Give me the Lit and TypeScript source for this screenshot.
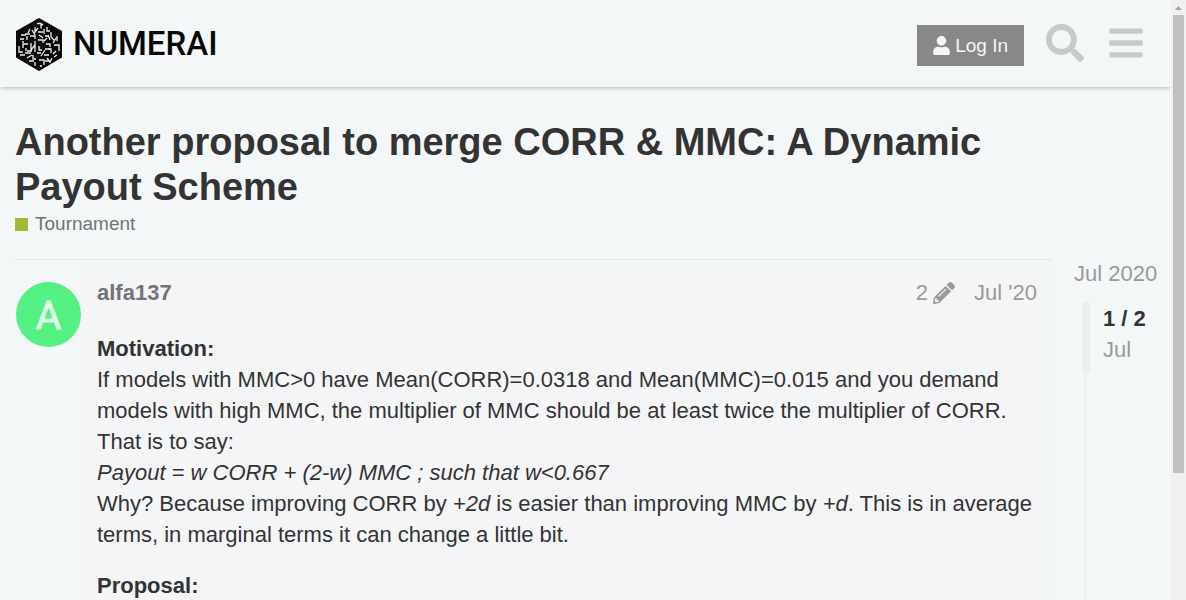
import { LitElement, html, css, svg } from "lit";
import { customElement } from "lit/decorators.js";

const icons = {
  user: {
    box: "0 0 448 512",
    d: "M224 256c70.7 0 128-57.3 128-128S294.7 0 224 0 96 57.3 96 128s57.3 128 128 128zm89.6 32h-16.7c-22.2 10.2-46.9 16-72.9 16s-50.6-5.8-72.9-16h-16.7C60.2 288 0 348.2 0 422.4V464c0 26.5 21.5 48 48 48h352c26.5 0 48-21.5 48-48v-41.6c0-74.2-60.2-134.4-134.4-134.4z",
  },
  search: {
    box: "0 0 512 512",
    d: "M505 442.7L405.3 343c-4.5-4.5-10.6-7-17-7H372c27.6-35.3 44-79.7 44-128C416 93.1 322.9 0 208 0S0 93.1 0 208s93.1 208 208 208c48.3 0 92.7-16.4 128-44v16.3c0 6.4 2.5 12.5 7 17l99.7 99.7c9.4 9.4 24.6 9.4 33.9 0l28.3-28.3c9.4-9.4 9.4-24.6.1-34zM208 336c-70.7 0-128-57.2-128-128 0-70.7 57.2-128 128-128 70.7 0 128 57.2 128 128 0 70.7-57.2 128-128 128z",
  },
  bars: {
    box: "0 0 448 512",
    d: "M16 132h416c8.8 0 16-7.2 16-16V76c0-8.8-7.2-16-16-16H16C7.2 60 0 67.2 0 76v40c0 8.8 7.2 16 16 16zm0 160h416c8.8 0 16-7.2 16-16v-40c0-8.8-7.2-16-16-16H16c-8.8 0-16 7.2-16 16v40c0 8.8 7.2 16 16 16zm0 160h416c8.8 0 16-7.2 16-16v-40c0-8.8-7.2-16-16-16H16c-8.8 0-16 7.2-16 16v40c0 8.8 7.2 16 16 16z",
  },
  pencil: {
    box: "0 0 512 512",
    d: "M497.9 142.1l-46.1 46.1c-4.7 4.7-12.3 4.7-17 0l-111-111c-4.7-4.7-4.7-12.3 0-17l46.1-46.1c18.7-18.7 49.1-18.7 67.9 0l60.1 60.1c18.8 18.7 18.8 49.1 0 67.9zM284.2 99.8L21.6 362.4.4 483.9c-2.9 16.4 11.4 30.6 27.8 27.8l121.5-21.3 262.6-262.6c4.7-4.7 4.7-12.3 0-17l-111-111c-4.8-4.7-12.4-4.7-17.1 0zM124.1 339.9c-5.5-5.5-5.5-14.3 0-19.8l154-154c5.5-5.5 14.3-5.5 19.8 0s5.5 14.3 0 19.8l-154 154c-5.5 5.5-14.3 5.5-19.8 0zM88 424h48v36.3l-64.5 11.3-31.1-31.1L51.7 376H88v48z",
  },
};

const icon = (name: keyof typeof icons) => html`
  <svg class="icon ${name}" viewBox=${icons[name].box} aria-hidden="true">
    ${svg`<path d=${icons[name].d}></path>`}
  </svg>
`;

@customElement("app-root")
export class AppRoot extends LitElement {
  static styles = css`
    :host {
      display: flex;
      height: 100vh;
      overflow: hidden;
      background: #f3f7f8;
      color: #333;
      font: 22px/31px "Liberation Sans", Arial, sans-serif;
    }
    a {
      color: inherit;
      text-decoration: none;
    }
    button {
      border: 0;
      padding: 0;
      background: none;
      font: inherit;
      cursor: pointer;
    }
    .icon {
      display: block;
      fill: currentColor;
    }
    .page {
      flex: 1;
      min-width: 0;
      overflow: hidden;
    }

    .header {
      display: flex;
      align-items: center;
      height: 87px;
      padding: 0 15px 1px;
      box-sizing: border-box;
      box-shadow: 0 2px 4px -1px rgba(0, 0, 0, 0.25);
    }
    .logo {
      display: flex;
      align-items: center;
      gap: 10px;
      margin: 2px auto 0 0;
      color: #070909;
      font: 500 33px/52px Roboto, sans-serif;
    }
    .mark {
      width: 48px;
      height: 54px;
    }
    .login {
      display: flex;
      align-items: center;
      gap: 5px;
      height: 41px;
      padding: 0 16px;
      margin: 5px 10px 0 0;
      background: #888;
      color: #f3f7f8;
      font-size: 19px;
    }
    .user {
      width: 17px;
      height: 19px;
    }
    .tool {
      display: flex;
      justify-content: center;
      align-items: center;
      width: 61px;
      height: 60px;
      color: #c8c9ca;
    }
    .search {
      width: 38px;
      height: 38px;
    }
    .bars {
      width: 34px;
      height: 38px;
    }

    .content {
      padding: 33px 15px 0;
    }
    h1 {
      margin: 0;
      padding-right: 103px;
      font-size: 38px;
      line-height: 45px;
    }
    .category {
      display: flex;
      width: fit-content;
      align-items: center;
      gap: 7px;
      color: #737475;
      font-size: 19px;
      line-height: 28px;
    }
    .swatch {
      width: 13px;
      height: 13px;
      background: #a1b83b;
    }
    .topic {
      display: grid;
      grid-template-columns: minmax(0, 1fr) 82px;
      column-gap: 21px;
      margin-top: 21px;
    }
    .post {
      display: flex;
      border-top: 1px solid #e8e9ea;
    }
    .avatar {
      flex: none;
      display: block;
      width: 65px;
      height: 65px;
      margin: 22px 0 0 1px;
    }
    .avatar svg {
      display: block;
    }
    .body {
      flex: 1;
      min-width: 0;
      padding: 17px 16px 40px;
      background: #f4f5f7;
    }
    .meta {
      display: flex;
      color: #9a9a9a;
    }
    .name {
      margin-right: auto;
      color: #727374;
      font-weight: bold;
    }
    .edits {
      display: flex;
      align-items: center;
      gap: 5px;
      margin-right: 19px;
      color: #9a9a9a;
    }
    .pencil {
      width: 22px;
      height: 22px;
    }
    .cooked {
      padding-top: 25px;
    }
    .cooked p {
      margin: 0 0 20px;
    }

    .timeline {
      color: #9a9a9a;
    }
    .start {
      display: block;
      line-height: 30px;
      white-space: nowrap;
    }
    .track {
      display: grid;
      grid-template-columns: 8px 1fr;
      grid-template-rows: 72px 400px;
      column-gap: 13px;
      padding: 12px 0 0 8px;
    }
    .handle {
      border-radius: 4px;
      background: #ededee;
    }
    .position {
      padding-top: 2px;
    }
    .position strong {
      display: block;
      color: #333;
    }
    .line {
      width: 1px;
      margin-left: 3px;
      background: #e9ecec;
    }

    .scrollbar {
      flex: none;
      width: 15px;
      background: #f0f0f0;
    }
    .arrow {
      display: block;
      width: 15px;
      height: 15px;
    }
    .thumb {
      height: 458px;
      margin: 0 2px;
      background: #c0c0c0;
    }
  `;

  render() {
    return html`
      <div class="page">
        <header class="header">
          <a class="logo" href="#" aria-label="Numerai forum home">
            <svg class="mark" viewBox="0 0 48 54" aria-hidden="true">
              <path d="M24 2 46 14.500V40L24 53 2 40V14.500Z" fill="#070909" stroke="#070909" stroke-width="2" stroke-linejoin="round"></path>
              <path
                d="M22 6.500h4v5M28 7l-2 2M20 10v5l3-4M15 12l-2 4M17 13l3 5M29 12v5M32 10v4h3M23 15h5M36 15v5l3 3M10 17h5M6 18h5M12 19v4M15 19h5v3M24 18l4 3M30 19h4M35 23l-2-5M5 22l4 0M42 19v5M38 26l3-5M20 24v4M23 23h5v3M29 24l3-3M13 27h-5v4M8 26v-2M16 26v7l4-5v7M12 34h5M24 29v4h3M31 27h4v3M39 28h5v6M30 32h6v4M4 29v6h4M10 36h6M5 38h5M22 36h4M26 39l4-6M34 38h-5M38 37l3-3M42 38l-3 2M12 41l5-3M18 38v4h3M24 43h5v5M14 44h5M32 41l3 4 2-4M20 45v4M25 49h2M30 44h4M11 31v3M34 31v2"
                fill="none" stroke="#eef1f2" stroke-width="1.300"></path>
            </svg>
            <span>NUMERAI</span>
          </a>
          <button class="login">${icon("user")}<span>Log In</span></button>
          <button class="tool" aria-label="Search">${icon("search")}</button>
          <button class="tool" aria-label="Menu">${icon("bars")}</button>
        </header>

        <main class="content">
          <h1><a href="#">Another proposal to merge CORR &amp; MMC: A Dynamic Payout Scheme</a></h1>
          <a class="category" href="#"><span class="swatch"></span>Tournament</a>

          <div class="topic">
            <article class="post">
              <a class="avatar" href="#" aria-label="alfa137">
                <svg width="65" height="65" viewBox="0 0 65 65" aria-hidden="true">
                  <circle cx="32.500" cy="32.500" r="32.500" fill="#55f083"></circle>
                  <text x="32.500" y="47" text-anchor="middle" font-family="Roboto, sans-serif" font-size="39" fill="#dcfde5" stroke="#dcfde5" stroke-width="1">A</text>
                </svg>
              </a>
              <div class="body">
                <div class="meta">
                  <a class="name" href="#">alfa137</a>
                  <button class="edits" aria-label="2 edits"><span>2</span>${icon("pencil")}</button>
                  <a href="#">Jul '20</a>
                </div>
                <div class="cooked">
                  <p>
                    <strong>Motivation:</strong><br />
                    If models with MMC&gt;0 have Mean(CORR)=0.0318 and Mean(MMC)=0.015 and you demand
                    models with high MMC, the multiplier of MMC should be at least twice the multiplier of CORR.
                    That is to say:<br />
                    <em>Payout = w CORR + (2-w) MMC ; such that w&lt;0.667</em><br />
                    Why? Because improving CORR by <em>+2d</em> is easier than improving MMC by <em>+d</em>. This is
                    in average terms, in marginal terms it can change a little bit.
                  </p>
                  <p><strong>Proposal:</strong></p>
                </div>
              </div>
            </article>

            <aside class="timeline">
              <a class="start" href="#">Jul 2020</a>
              <div class="track">
                <div class="handle"></div>
                <div class="position"><strong>1 / 2</strong>Jul</div>
                <div class="line"></div>
              </div>
            </aside>
          </div>
        </main>
      </div>
      <div class="scrollbar" aria-hidden="true">
        <svg class="arrow" viewBox="0 0 15 15"><path d="M4 10h7L7.500 6z" fill="#a3a3a3"></path></svg>
        <div class="thumb"></div>
      </div>
    `;
  }
}
